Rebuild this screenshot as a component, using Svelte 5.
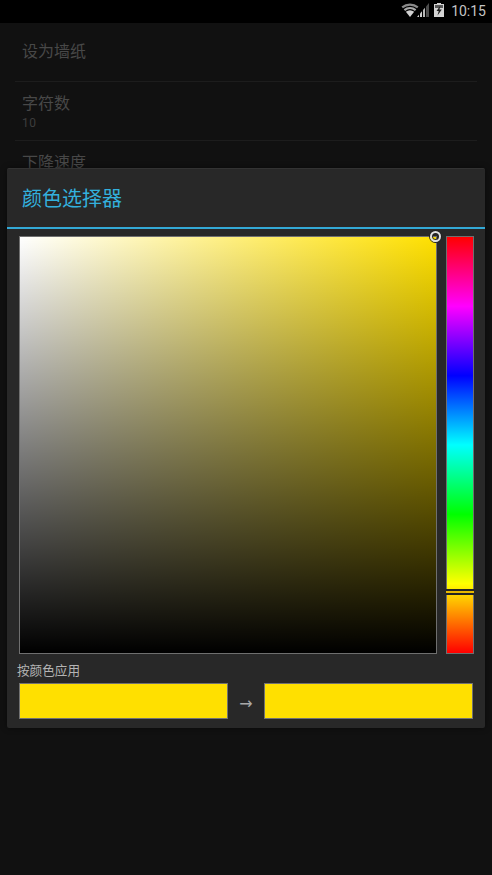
<script>
  const rows = [
    { title: '设为墙纸', sub: '', solo: true },
    { title: '字符数', sub: '10', solo: false },
    { title: '下降速度', sub: '', solo: false }
  ];
  const hue = 'linear-gradient(to top,#f00 0%,#ff0 16.67%,#0f0 33.33%,#0ff 50%,#00f 66.67%,#f0f 83.33%,#f00 100%)';
</script>

<div class="screen">
  <header class="status">
    <svg class="ic wifi" viewBox="0 0 18 14">
      <path d="M.5 3.510A13.500 13.500 0 0 1 17.500 3.510L16.060 5.300A11.200 11.200 0 0 0 1.940 5.300Z" fill="#8a8a8a"/>
      <path d="M2.700 6.230A10 10 0 0 1 15.300 6.230L13.910 7.940A7.800 7.800 0 0 0 4.090 7.940Z" fill="#a8a8a8"/>
      <path d="M4.840 8.870A6.600 6.600 0 0 1 13.160 8.870L9 14Z" fill="#d2d2d2"/>
    </svg>
    <svg class="ic signal" viewBox="0 0 12 14">
      <path d="M0 14 2 11.700V14Z" fill="#d0d0d0"/>
      <path d="M3 10.500 5 8.200V14H3Z" fill="#d0d0d0"/>
      <path d="M6 7 8 4.700V14H6Z" fill="#b8b8b8"/>
      <path d="M9 3.500 12 0V14H9Z" fill="#4c4c4c"/>
    </svg>
    <svg class="ic batt" viewBox="0 0 10 14">
      <path d="M3 0h4v1h3v13H0V1h3z" fill="#d4d4d4"/>
      <path d="M1 2h8v3H1z" fill="#5a5a5a"/>
      <path d="M6.500 2.500 2.500 8h2.200L3.500 12.500 7.800 6.500H5.400z" fill="#1c1c1c"/>
    </svg>
    <span class="time">10:15</span>
  </header>

  <ul class="list">
    {#each rows as row}
      <li class="row" class:solo={row.solo}>
        <span class="title">{row.title}</span>
        {#if row.sub}<span class="sub">{row.sub}</span>{/if}
      </li>
    {/each}
  </ul>

  <section class="dialog">
    <h2 class="head">颜色选择器</h2>
    <div class="body">
      <div class="picker">
        <div class="sv">
          <span class="knob"></span>
        </div>
        <div class="hue" style="background:{hue}">
          <span class="marker"></span>
        </div>
      </div>
      <p class="label">按颜色应用</p>
      <div class="swatches">
        <div class="swatch"></div>
        <span class="arrow">→</span>
        <div class="swatch"></div>
      </div>
    </div>
  </section>
</div>

<style>
  :global(body) { margin: 0; background: #111; }
  .screen {
    position: relative;
    width: 492px;
    height: 875px;
    overflow: hidden;
    background: #111;
    font-family: "Noto Sans CJK SC", Roboto, sans-serif;
  }
  .status {
    height: 23px;
    background: #000;
    display: flex;
    align-items: center;
    justify-content: flex-end;
    padding-right: 6px;
    box-sizing: border-box;
  }
  .ic { display: block; flex: none; margin-top: -3px; }
  .wifi { width: 18px; height: 14px; }
  .signal { width: 12px; height: 14px; margin-left: -2px; }
  .batt { width: 10px; height: 14px; margin-left: 5px; }
  .time {
    margin-left: 7px;
    font: 14px/23px Roboto, sans-serif;
    color: #c4c4c4;
  }
  .list { list-style: none; margin: 0; padding: 0 15px; }
  .row {
    height: 59px;
    box-sizing: border-box;
    padding: 10px 7px 0;
    border-bottom: 1px solid #1d1d1d;
    display: flex;
    flex-direction: column;
  }
  .row.solo { padding-top: 17px; }
  .title { font-size: 16px; line-height: 21px; color: #484848; }
  .sub { font: 12px/16px Roboto, sans-serif; color: #3d3d3d; letter-spacing: 0.5px; margin-top: 2px; }
  .dialog {
    position: absolute;
    left: 7px;
    top: 168px;
    width: 478px;
    height: 560px;
    box-sizing: border-box;
    background: #282828;
    border-top: 1px solid #333;
    border-radius: 2px;
    box-shadow: 0 0 6px rgba(0,0,0,.45);
  }
  .head {
    margin: 0;
    height: 60px;
    box-sizing: border-box;
    padding-left: 15px;
    border-bottom: 2px solid #33a9d6;
    font-size: 20px;
    font-weight: 400;
    line-height: 58px;
    color: #33b0dd;
  }
  .body { padding: 7px 12px 0; }
  .picker { display: flex; gap: 9px; align-items: flex-start; }
  .sv {
    position: relative;
    width: 416px;
    height: 416px;
    flex: none;
    border: 1px solid #6f6f6f;
    background:
      linear-gradient(to bottom, rgba(0,0,0,0), #000),
      linear-gradient(to right, #fff, #ffe000);
  }
  .knob {
    position: absolute;
    right: -5px;
    top: -6px;
    width: 7px;
    height: 7px;
    border: 2px solid #e0e0e0;
    border-radius: 50%;
    box-shadow: 0 0 0 1px #222, inset 0 0 0 1px #222;
  }
  .hue {
    position: relative;
    width: 26px;
    height: 416px;
    flex: none;
    border: 1px solid #6f6f6f;
  }
  .marker {
    position: absolute;
    left: -1px;
    right: -1px;
    top: 352px;
    height: 2px;
    border-top: 2px solid #242424;
    border-bottom: 2px solid #242424;
    background: #e8b800;
  }
  .label {
    margin: 6px 0 0 -2px;
    font-size: 12.6px;
    line-height: 20px;
    color: #b4b4b4;
  }
  .swatches { display: flex; align-items: center; margin-top: 3px; }
  .swatch {
    width: 207px;
    height: 34px;
    flex: none;
    background: #ffe000;
    border: 1px solid #727272;
  }
  .arrow {
    width: 36px;
    flex: none;
    padding-top: 5px;
    text-align: center;
    font: 16px/20px "DejaVu Sans", sans-serif;
    color: #a8a8a8;
  }
</style>
